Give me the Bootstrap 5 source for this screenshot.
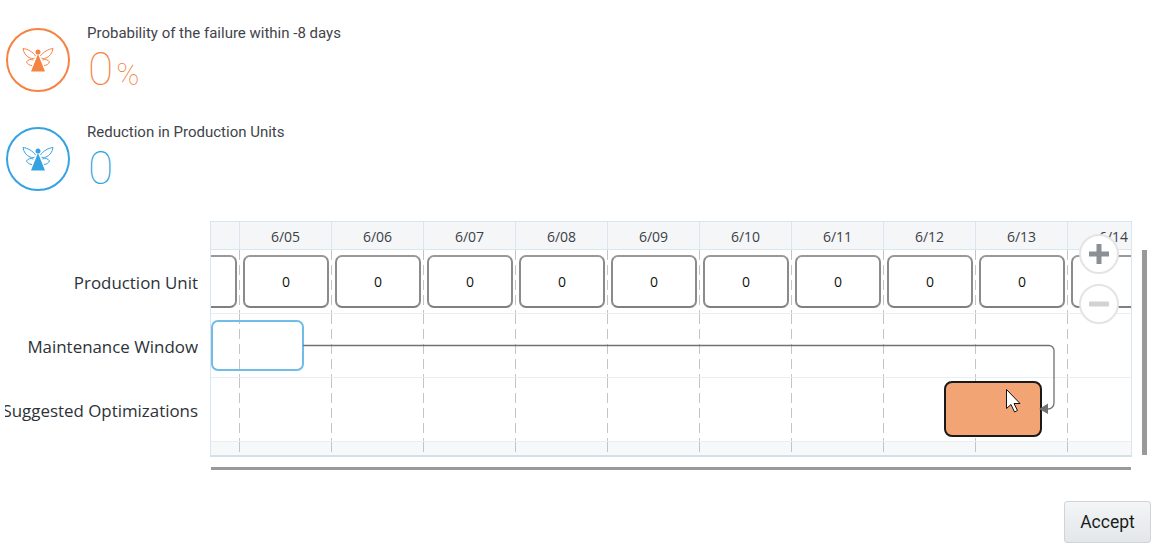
<!DOCTYPE html>
<html lang="en">
<head>
  <meta charset="UTF-8" />
  <title>Optimization</title>
  <link href="https://cdn.jsdelivr.net/npm/bootstrap@5.3.0/dist/css/bootstrap.min.css" rel="stylesheet" />
  <style>
    body { background: #fff; padding-top: 28px; overflow: hidden; font-family: Roboto, "Liberation Sans", sans-serif; }
    .stat-row { height: 64px; margin-left: 6px; margin-bottom: 35px; }
    .stat-icon { width: 64px; height: 64px; border: 2px solid currentColor; border-radius: 50%; flex-shrink: 0; }
    .stat-text { margin-left: 17px; margin-top: -4px; }
    .stat-title { font-size: 15px; line-height: 18px; color: #3f444a; }
    .stat-value { font-size: 46px; font-weight: 100; line-height: 46px; margin-top: 4px; margin-left: 1px; height: 46px; }
    .stat-unit { font-size: 31px; font-weight: 100; margin-left: 3px; }
    .tone-orange { color: #f58342; }
    .tone-blue { color: #35a2e2; }
    .gantt-wrap { margin-top: -5px; }
    .label-col { width: 193px; margin-left: 5px; margin-right: 12px; padding-top: 29px; overflow: hidden; flex-shrink: 0; }
    .label-line { height: 64px; font-family: "Open Sans", "Noto Sans", sans-serif; font-size: 16.9px; color: #2c3238; white-space: nowrap; padding-top: 1px; }
    .chart { position: relative; width: 922px; height: 236px; border: 1px solid #d9e5ef; border-bottom: 2px solid #d5dfe6; overflow: hidden; flex-shrink: 0; font-family: "Open Sans", "Noto Sans", sans-serif; }
    .chart-line { height: 64px; border-bottom: 1px solid #e9eef1; }
    .chart-head { height: 28px; background: #f4f6f8; border-bottom: 1px solid #dbe6ef; font-size: 14px; color: #3c4146; }
    .chart-foot { height: 15px; background: #f6f8fa; }
    .slot-first { width: 28px; flex-shrink: 0; display: flex; justify-content: flex-end; padding-right: 2px; }
    .slot { width: 92px; flex-shrink: 0; padding-left: 4px; }
    .chart-line .slot, .chart-foot .slot { background: linear-gradient(#bfc5ca 67%, transparent 67%) left top / 1px 15px repeat-y; }
    .chart-head .slot { border-left: 1px solid #dbe6ef; line-height: 28px; text-align: center; padding-left: 0; padding-top: 1px; }
    .unit-box { width: 86px; height: 53px; margin-top: 5px; flex-shrink: 0; background: #fff; border: 2px solid; border-color: #999 #8b8b8b #808080; border-radius: 7px; font-size: 14px; color: #111; display: flex; align-items: center; justify-content: center; }
    .window-box { position: absolute; left: 0; top: 98px; width: 93px; height: 51px; border: 2px solid #6fbde8; border-radius: 7px; }
    .suggest-box { position: absolute; left: 733px; top: 159px; width: 98px; height: 56px; background: #f2a474; border: 2px solid #1a1a1a; border-radius: 8px; }
    .link-svg { position: absolute; left: 0; top: 0; }
    .zoom-btn { position: absolute; left: 868px; width: 40px; height: 40px; background: #fff; border: 2px solid #e4e4e4; border-radius: 50%; display: flex; align-items: center; justify-content: center; }
    .zoom-plus { top: 12px; }
    .zoom-minus { top: 62px; }
    .scroll-v { width: 5px; height: 205px; background: #999; margin-top: 29px; margin-left: 10px; }
    .scroll-h { width: 920px; height: 3px; background: #999; margin-left: 211px; margin-top: 10px; }
    .accept-btn { width: 87px; height: 42px; font-size: 17.5px; color: #1a1d20; background: linear-gradient(#f3f5f6, #e3e7ea); border: 1px solid #ced4d8; border-radius: 3px; padding: 0; margin-right: 6px; margin-top: 31px; }
  </style>
</head>
<body>
  <svg width="0" height="0" class="position-absolute">
    <symbol id="angel" viewBox="0 0 32 26">
      <path d="M16 7 23 24.500 9 24.500Z" fill="currentColor"/>
      <circle cx="16" cy="5" r="2.500" fill="currentColor"/>
      <path d="M13.500 9C11 5 5.500 2 1 1.500c.5 4 3 8 7 9.500 2 .7 4 .7 4.500 0M11.500 13c-3-1-5.500-.5-7 2 1 2 3 3.500 5.500 3.500M18.500 9C21 5 26.500 2 31 1.500c-.5 4-3 8-7 9.500-2 .7-4 .7-4.500 0M20.500 13c3-1 5.500-.5 7 2-1 2-3 3.500-5.500 3.500" fill="none" stroke="currentColor" stroke-width="1"/>
    </symbol>
  </svg>

  <div class="d-flex stat-row tone-orange">
    <div class="stat-icon d-flex align-items-center justify-content-center">
      <svg width="32" height="26"><use href="#angel"/></svg>
    </div>
    <div class="stat-text">
      <div class="stat-title">Probability of the failure within -8 days</div>
      <div class="stat-value">0<span class="stat-unit">%</span></div>
    </div>
  </div>
  <div class="d-flex stat-row tone-blue">
    <div class="stat-icon d-flex align-items-center justify-content-center">
      <svg width="32" height="26"><use href="#angel"/></svg>
    </div>
    <div class="stat-text">
      <div class="stat-title">Reduction in Production Units</div>
      <div class="stat-value">0</div>
    </div>
  </div>

  <div class="d-flex gantt-wrap">
    <div class="label-col">
      <div class="label-line d-flex align-items-center justify-content-end">Production Unit</div>
      <div class="label-line d-flex align-items-center justify-content-end">Maintenance Window</div>
      <div class="label-line d-flex align-items-center justify-content-end">Suggested Optimizations</div>
    </div>
    <div class="chart">
      <div class="d-flex chart-head" id="headRow"><div class="slot-first"></div></div>
      <div class="d-flex chart-line" id="unitRow"><div class="slot-first"><div class="unit-box"></div></div></div>
      <div class="d-flex chart-line" id="windowRow"><div class="slot-first"></div></div>
      <div class="d-flex chart-line" id="suggestRow"><div class="slot-first"></div></div>
      <div class="d-flex chart-foot" id="footRow"><div class="slot-first"></div></div>
      <div class="window-box"></div>
      <div class="suggest-box"></div>
      <svg class="link-svg" width="920" height="234">
        <path d="M92 123.500H838a5 5 0 0 1 5 5V181a6 6 0 0 1-6 6H835" fill="none" stroke="#6f7173" stroke-width="1.300"/>
        <path d="M828 187 837 181.500V192Z" fill="#6f7173"/>
        <path d="M795.500 167.500V186.500L800 182.500 803.500 190 806.500 188.500 803 181.500H809Z" fill="#fff" stroke="#111" stroke-width="1"/>
      </svg>
      <div class="zoom-btn zoom-plus">
        <svg width="24" height="24"><path d="M9.500 2h5v7.500H22v5h-7.500V22h-5v-7.500H2v-5h7.500Z" fill="#8b9094"/></svg>
      </div>
      <div class="zoom-btn zoom-minus">
        <svg width="24" height="24"><rect x="2" y="9.500" width="20" height="5" rx="1" fill="#d2d2d2"/></svg>
      </div>
    </div>
    <div class="scroll-v"></div>
  </div>
  <div class="scroll-h"></div>
  <div class="d-flex justify-content-end">
    <button type="button" class="btn accept-btn">Accept</button>
  </div>

  <script>
    // build the date columns
    var days = ["6/05","6/06","6/07","6/08","6/09","6/10","6/11","6/12","6/13","6/14"];
    function slot(html) {
      var d = document.createElement("div");
      d.className = "slot";
      d.innerHTML = html || "";
      return d;
    }
    days.forEach(function (day) {
      document.getElementById("headRow").appendChild(slot(day));
      document.getElementById("unitRow").appendChild(slot(day === "6/14" ? '<div class="unit-box"></div>' : '<div class="unit-box">0</div>'));
      document.getElementById("windowRow").appendChild(slot());
      document.getElementById("suggestRow").appendChild(slot());
      document.getElementById("footRow").appendChild(slot());
    });
  </script>
</body>
</html>
